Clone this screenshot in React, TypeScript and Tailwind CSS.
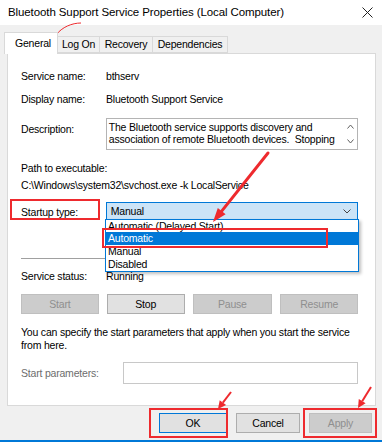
import type { ReactNode } from "react";

const font = { fontFamily: '"Liberation Sans", Arial, sans-serif' };

function Tab({ label, w, active = false }: { label: string; w: string; active?: boolean }) {
  return active ? (
    <div className={`${w} relative z-10 -mb-px flex h-[22px] items-center border border-b-0 border-[#d9d9d9] bg-white pl-[10px]`}>
      {label}
    </div>
  ) : (
    <div className={`${w} -ml-px flex h-[17px] items-center justify-center border border-[#d9d9d9] bg-[#f0f0f0]`}>
      {label}
    </div>
  );
}

function Btn({
  children,
  tone = "normal",
  className = "",
}: {
  children: ReactNode;
  tone?: "normal" | "disabled" | "default";
  className?: string;
}) {
  const t =
    tone === "disabled"
      ? "border-[#bfbfbf] bg-[#cccccc] text-[#8f8f8f]"
      : tone === "default"
        ? "border-[#0078d7] bg-[#e1e1e1] text-black"
        : "border-[#adadad] bg-[#e1e1e1] text-black";
  return (
    <div className={`flex h-[20px] items-center justify-center border ${t} ${className}`}>{children}</div>
  );
}

function Row({ label, children, className = "" }: { label: string; children: ReactNode; className?: string }) {
  return (
    <div className={`flex h-[13px] items-center ${className}`}>
      <div className="w-[85px]">{label}</div>
      <div>{children}</div>
    </div>
  );
}

export default function App() {
  return (
    <div
      className="relative h-[442px] w-[382px] overflow-hidden bg-[#f0f0f0] text-[10.5px] leading-[13px] tracking-[-0.2px] text-black"
      style={font}
    >
      {/* title bar */}
      <div className="flex h-[25px] items-center justify-between bg-white pl-[8px] pr-[9px] text-[11.5px] tracking-[-0.1px]">
        <span>Bluetooth Support Service Properties (Local Computer)</span>
        <svg width="11" height="11" viewBox="0 0 11 11">
          <path d="M0.5 0.5 L10.5 10.5 M10.5 0.5 L0.5 10.5" stroke="#222" strokeWidth="1" />
        </svg>
      </div>

      {/* tabs */}
      <div className="flex h-[28px] items-end pl-[4px]">
        <Tab label="General" w="w-[54px]" active />
        <Tab label="Log On" w="w-[43px]" />
        <Tab label="Recovery" w="w-[54px]" />
        <Tab label="Dependencies" w="w-[76px]" />
      </div>

      {/* panel */}
      <div className="mx-[7px] h-[353px] w-[369px] border border-[#d9d9d9] bg-white pl-[13px] pr-[17px]">
        <Row label="Service name:" className="mt-[16px]">bthserv</Row>
        <Row label="Display name:" className="mt-[10px]">Bluetooth Support Service</Row>

        <div className="mt-[12px] flex">
          <div className="w-[85px] pt-[5px]">Description:</div>
          <div className="flex h-[32px] w-[253px] border border-[#b4b4b4]">
            <div className="h-[30px] flex-1 overflow-hidden pl-[2px] pt-[2px] leading-[12px]">
              The Bluetooth service supports discovery and association of remote Bluetooth devices.&nbsp; Stopping
            </div>
            <div className="flex w-[14px] flex-col items-center justify-between py-[5px]">
              <svg width="7" height="5" viewBox="0 0 7 5">
                <path d="M0.5 4.5 L3.5 1 L6.5 4.5" fill="none" stroke="#606060" strokeWidth="1" />
              </svg>
              <svg width="7" height="5" viewBox="0 0 7 5">
                <path d="M0.5 0.5 L3.5 4 L6.5 0.5" fill="none" stroke="#606060" strokeWidth="1" />
              </svg>
            </div>
          </div>
        </div>

        <div className="mt-[12px]">Path to executable:</div>
        <div className="mt-[4px]">C:\Windows\system32\svchost.exe -k LocalService</div>

        <div className="mt-[10px] flex items-center">
          <div className="w-[85px] pt-[1px]">Startup type:</div>
          <div className="flex h-[19px] w-[253px] items-center justify-between border border-[#0078d7] bg-[#cce4f7] pl-[4px] pr-[6px]">
            <span>Manual</span>
            <svg width="8" height="5" viewBox="0 0 8 5">
              <path d="M0.5 0.5 L4 4 L7.5 0.5" fill="none" stroke="#444" strokeWidth="1" />
            </svg>
          </div>
        </div>

        <div className="mt-[37px] h-px w-[338px] bg-[#a0a0a0]" />

        <Row label="Service status:" className="mt-[11px]">Running</Row>

        <div className="mt-[11px] flex gap-[8px]">
          <Btn tone="disabled" className="w-[78px]">Start</Btn>
          <Btn className="w-[78px]">Stop</Btn>
          <Btn tone="disabled" className="w-[80px]">Pause</Btn>
          <Btn tone="disabled" className="w-[78px]">Resume</Btn>
        </div>

        <div className="mt-[12px] w-[340px]">
          You can specify the start parameters that apply when you start the service from here.
        </div>

        <div className="mt-[10px] flex items-center">
          <div className="w-[102px] text-[#6d6d6d]">Start parameters:</div>
          <div className="h-[22px] w-[236px] border border-[#c8c8c8] bg-white" />
        </div>
      </div>

      {/* dialog buttons */}
      <div className="mt-[7px] flex justify-end gap-[9px] pr-[10px]">
        <Btn tone="default" className="w-[68px]">OK</Btn>
        <Btn className="w-[64px]">Cancel</Btn>
        <Btn tone="disabled" className="w-[63px]">Apply</Btn>
      </div>
      <div className="absolute bottom-0 left-0 h-[2px] w-full bg-[#0078d7]" />

      {/* open dropdown list */}
      <div className="absolute left-[105px] top-[219px] w-[254px] border border-[#0078d7] bg-white shadow-[2px_2px_3px_rgba(0,0,0,0.25)]">
        <div className="h-[12px] pl-[2px] leading-[12px]">Automatic (Delayed Start)</div>
        <div className="h-[13px] bg-[#0078d7] pl-[2px] text-white">Automatic</div>
        <div className="h-[13px] pl-[2px]">Manual</div>
        <div className="h-[13px] pl-[2px]">Disabled</div>
      </div>

      {/* red annotation boxes */}
      <div className="absolute left-[10px] top-[199px] h-[21px] w-[90px] border-2 border-[#ee2a2e]" />
      <div className="absolute left-[102px] top-[228px] h-[20px] w-[226px] border-2 border-[#ee2a2e]" />
      <div className="absolute left-[149px] top-[408px] h-[30px] w-[79px] border-2 border-[#ee2a2e]" />
      <div className="absolute left-[303px] top-[408px] h-[30px] w-[74px] border-2 border-[#ee2a2e]" />

      {/* red arrows */}
      <svg className="pointer-events-none absolute left-0 top-0" width="382" height="442">
        <path d="M81 23 C72 23 62 27 56 35 L48 46 M44 39 L48 46" fill="none" stroke="#ee2a2e" strokeWidth="1" />
        <path d="M268 153 L221.7 211.1" stroke="#ee2a2e" strokeWidth="3" strokeLinecap="round" />
        <polygon points="213,222 225.6,214.2 217.8,208" fill="#ee2a2e" />
        <path d="M231 392 L222.9 402.7" stroke="#ee2a2e" strokeWidth="2" />
        <polygon points="218,409 226.1,405.1 219.7,400.3" fill="#ee2a2e" />
        <path d="M371 387 L362.2 401.2" stroke="#ee2a2e" strokeWidth="2" />
        <polygon points="358,408 365.6,403.3 358.8,399.1" fill="#ee2a2e" />
      </svg>
    </div>
  );
}
